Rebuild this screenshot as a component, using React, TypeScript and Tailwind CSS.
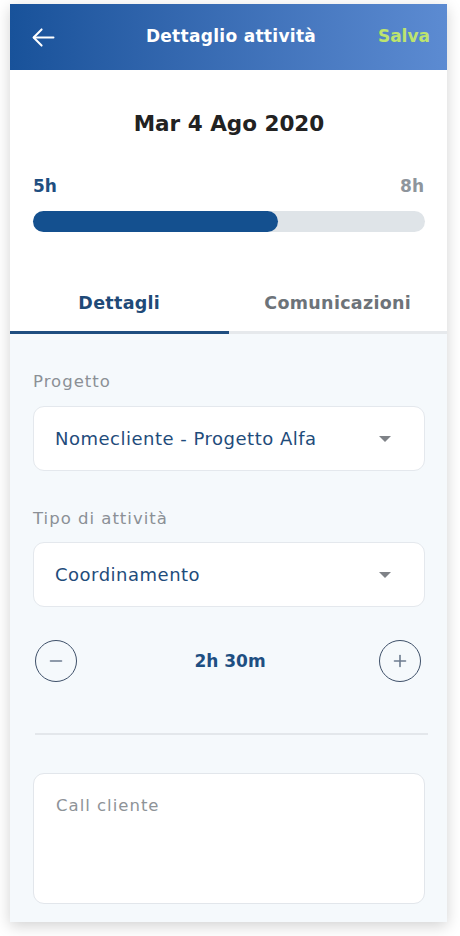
const font = { fontFamily: '"DejaVu Sans", Inter, sans-serif' };

function BackArrow() {
  return (
    <svg viewBox="0 0 24 20" className="h-[19px] w-[23px]" fill="none" stroke="white" strokeWidth={2.1} strokeLinecap="round" strokeLinejoin="round">
      <path d="M22.5 10H1.8" />
      <path d="M10 1.5L1.6 10L10 18.5" />
    </svg>
  );
}

function Caret() {
  return (
    <svg viewBox="0 0 14 7" className="h-[6px] w-[12px]">
      <polygon points="0,0 14,0 7,7" fill="#7f8287" />
    </svg>
  );
}

function SelectBox({ value }: { value: string }) {
  return (
    <div className="flex h-[65px] items-center justify-between rounded-[11px] border border-[#e4e8ed] bg-white pl-[21px] pr-[33px]">
      <span className="text-[18px] leading-6 tracking-[0.5px] text-[#1f4c7b]">{value}</span>
      <Caret />
    </div>
  );
}

function RoundBtn({ plus }: { plus?: boolean }) {
  return (
    <button
      type="button"
      className="flex h-[42px] w-[42px] items-center justify-center rounded-full border-[1.7px] border-[#3e5069]"
    >
      <svg viewBox="0 0 14 14" className="h-[14px] w-[14px]" fill="none" stroke="#6c7b8f" strokeWidth={1.6} strokeLinecap="round">
        <path d="M1.5 7H12.5" />
        {plus && <path d="M7 1.5V12.5" />}
      </svg>
    </button>
  );
}

export default function App() {
  return (
    <div className="min-h-[936px] bg-white px-[10px] pt-[4px]" style={font}>
      <div className="w-[437px] bg-white shadow-[0_4px_14px_rgba(0,0,0,0.18)]">
        {/* header */}
        <div className="grid h-[66px] grid-cols-[1fr_auto_1fr] items-center bg-gradient-to-r from-[#18529a] to-[#5c8bd2] pl-[22px] pr-[17px]">
          <BackArrow />
          <span className="text-[17px] font-bold tracking-[0.3px] text-white">Dettaglio attività</span>
          <span className="text-right text-[17px] font-bold text-[#bde46e]">Salva</span>
        </div>

        {/* top section */}
        <div className="px-[23px] pr-[22px] pt-[40px]">
          <div className="text-center text-[21.5px] font-bold leading-7 text-[#222]">Mar 4 Ago 2020</div>
          <div className="mt-[38px] flex items-center justify-between text-[17px] font-bold leading-5">
            <span className="text-[#1f4e80]">5h</span>
            <span className="mr-[1px] text-[#8e959c]">8h</span>
          </div>
          <div className="mt-[15px] h-[21px] w-full rounded-full bg-[#dfe4e8]">
            <div className="h-full w-[62.5%] rounded-full bg-[#14508f]" />
          </div>
        </div>

        {/* tabs */}
        <div className="mt-[43px] flex">
          <div className="flex-1 border-b-[3px] border-[#1f4e80] pb-[18px] pt-[18px] text-center text-[17.5px] font-bold leading-5 tracking-[0.3px] text-[#1f4a78]">
            Dettagli
          </div>
          <div className="flex-1 border-b-[3px] border-[#e6e9ec] pb-[18px] pt-[18px] text-center text-[17.5px] font-bold leading-5 tracking-[0.3px] text-[#6d7379]">
            Comunicazioni
          </div>
        </div>

        {/* form */}
        <div className="bg-[#f5f9fc] pb-[18px] pl-[23px] pr-[22px] pt-[38px]">
          <div className="text-[16.5px] leading-5 tracking-[1px] text-[#8b9096]">Progetto</div>
          <div className="mt-[14px]">
            <SelectBox value="Nomecliente - Progetto Alfa" />
          </div>

          <div className="mt-[38px] text-[16.5px] leading-5 tracking-[1px] text-[#8b9096]">Tipo di attività</div>
          <div className="mt-[13px]">
            <SelectBox value="Coordinamento" />
          </div>

          <div className="mt-[33px] flex items-center justify-between pl-[2px] pr-[4px]">
            <RoundBtn />
            <span className="ml-[4px] text-[17px] font-bold leading-5 text-[#1e4f82]">2h 30m</span>
            <RoundBtn plus />
          </div>

          <div className="ml-[2px] mr-[-3px] mt-[51px] h-[2px] bg-[#e3e7eb]" />

          <div className="mt-[38px] h-[131px] rounded-[11px] border border-[#e2e6eb] bg-white pl-[22px] pt-[20px]">
            <span className="text-[16.5px] leading-5 tracking-[1px] text-[#8e9398]">Call cliente</span>
          </div>
        </div>
      </div>
    </div>
  );
}
